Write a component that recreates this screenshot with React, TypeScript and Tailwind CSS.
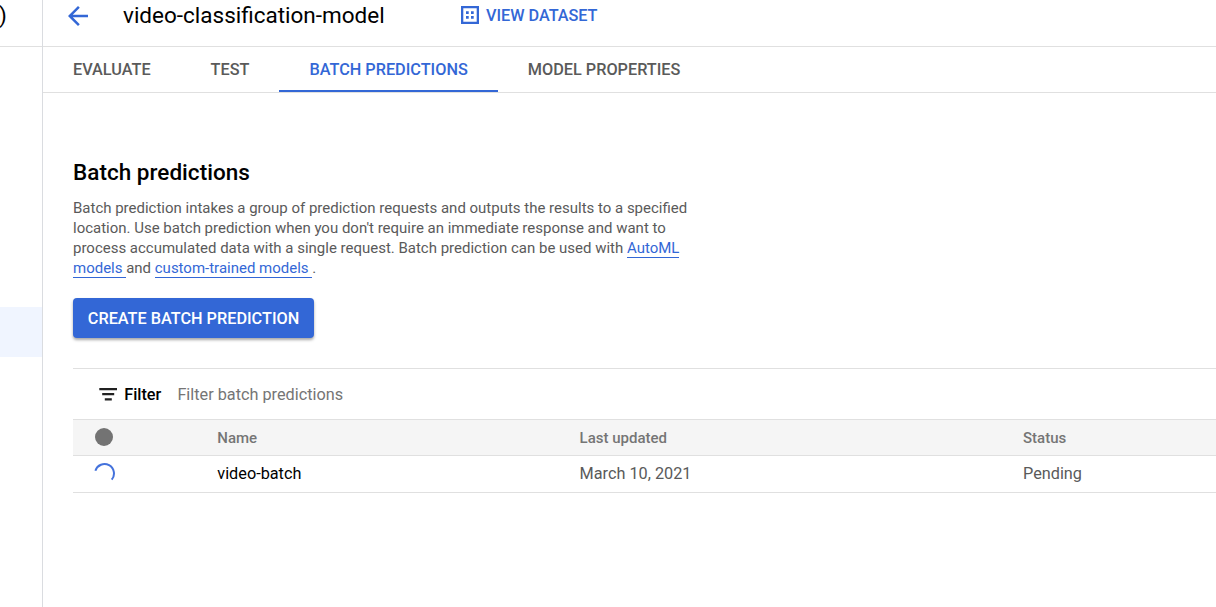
const tabs = [
  { label: 'EVALUATE', active: false },
  { label: 'TEST', active: false },
  { label: 'BATCH PREDICTIONS', active: true },
  { label: 'MODEL PROPERTIES', active: false },
];

function BackIcon() {
  return (
    <svg width="20" height="20" viewBox="4 4 16 16" fill="#3367d6">
      <path d="M20 11H7.83l5.59-5.59L12 4l-8 8 8 8 1.41-1.41L7.83 13H20z" />
    </svg>
  );
}

function DatasetIcon() {
  return (
    <svg width="18" height="18" viewBox="0 0 18 18" fill="#3367d6">
      <path fillRule="evenodd" d="M0 0h18v18H0zM2.3 2.3v13.4h13.4V2.3z" />
      <path d="M5 5.3h2.7v2.7H5zM10 5.3h2.7v2.7H10zM5 10h2.7v2.7H5zM10 10h2.7v2.7H10z" />
    </svg>
  );
}

function FilterIcon() {
  return (
    <svg width="18" height="14" viewBox="0 0 18 14" fill="#212121">
      <path d="M0.3 1h17.7v2.3H0.3zM3.2 6h12v2.3h-12zM5.8 11.2h7v2.3h-7z" />
    </svg>
  );
}

function Sidebar() {
  return (
    <aside className="w-[43px] shrink-0 overflow-hidden border-r border-[#dadce0]">
      <div className="h-[47px] border-b border-[#e0e0e0] text-[22.5px] leading-[30px] text-black">
        <span className="-ml-px block">)</span>
      </div>
      <div className="mt-[260px] h-[50px] bg-[#f0f5ff]" />
    </aside>
  );
}

function Header() {
  return (
    <header className="flex h-[47px] items-start border-b border-[#e0e0e0] pl-[25px]">
      <div className="mt-[6px] w-[55px]">
        <BackIcon />
      </div>
      <h1 className="w-[338px] text-[22.5px] leading-[30px] text-black">video-classification-model</h1>
      <div className="mt-[6px] flex gap-[7px]">
        <DatasetIcon />
        <span className="text-[16.25px] leading-[19px] font-medium tracking-[-0.03px] text-[#3367d6]">VIEW DATASET</span>
      </div>
    </header>
  );
}

function Tabs() {
  return (
    <nav className="flex h-[46px] border-b border-[#e0e0e0]">
      {tabs.map((t) => (
        <div
          key={t.label}
          className={
            t.active
              ? 'border-b-2 border-[#3367d6] px-[30px] text-[16.25px] leading-[45px] font-medium text-[#3367d6]'
              : 'px-[30px] text-[16.25px] leading-[45px] font-medium text-[#5a5a5a]'
          }
        >
          {t.label}
        </div>
      ))}
    </nav>
  );
}

const link = 'border-b border-[#3367d6] text-[#3367d6]';

export default function App() {
  return (
    <div className="flex h-[607px] overflow-hidden bg-white font-['Roboto',sans-serif] whitespace-nowrap">
      <Sidebar />
      <div className="min-w-0 flex-1">
        <Header />
        <Tabs />
        <main className="pt-[64px] pl-[30px]">
          <h2 className="text-[22.5px] leading-[30px] font-medium tracking-[0.03px] text-black">Batch predictions</h2>
          <p className="mt-[11px] text-[14.99px] leading-[20px] text-[#5a5a5a]">
            Batch prediction intakes a group of prediction requests and outputs the results to a specified
            <br />
            location. Use batch prediction when you don't require an immediate response and want to
            <br />
            process accumulated data with a single request. Batch prediction can be used with{' '}
            <span className={link}>AutoML</span>
            <br />
            <span className={link}>models </span>and <span className={link}>custom-trained models </span>.
          </p>
          <button className="mt-[20px] block h-[40px] w-[241px] rounded-[4px] bg-[#3367d6] pt-px text-[16.25px] leading-[40px] font-medium text-white shadow-[0_2px_3px_rgba(0,0,0,0.35)]">
            CREATE BATCH PREDICTION
          </button>
          <section className="mt-[30px] border-t border-[#e0e0e0]">
            <div className="flex h-[50px] items-center pl-[26px]">
              <FilterIcon />
              <span className="ml-[7.2px] w-[53.2px] pt-[2px] text-[16.25px] font-medium text-black">Filter</span>
              <span className="pt-[2px] text-[16.25px] text-[#757575]">Filter batch predictions</span>
            </div>
            <div className="grid h-[37px] grid-cols-[144.3px_362.3px_443.4px_1fr] items-center border-y border-[#e0e0e0] bg-[#f5f5f5] text-[15px] font-medium text-[#757575]">
              <span className="mb-px ml-[22px] size-[18px] rounded-full bg-[#737373]" />
              <span className="pt-[2px]">Name</span>
              <span className="pt-[2px]">Last updated</span>
              <span className="pt-[2px]">Status</span>
            </div>
            <div className="grid h-[37px] grid-cols-[144.3px_362.3px_443.4px_1fr] items-center border-b border-[#e0e0e0] text-[16.25px] text-[#5a5a5a]">
              <svg className="ml-[20px]" width="24" height="24" viewBox="0 0 24 24" fill="none" stroke="#4472dc" strokeWidth="2">
                <path d="M2.4 8.7A9.5 9.5 0 1 1 18.7 17.7" />
              </svg>
              <span className="text-black">video-batch</span>
              <span>March 10, 2021</span>
              <span>Pending</span>
            </div>
          </section>
        </main>
      </div>
    </div>
  );
}
